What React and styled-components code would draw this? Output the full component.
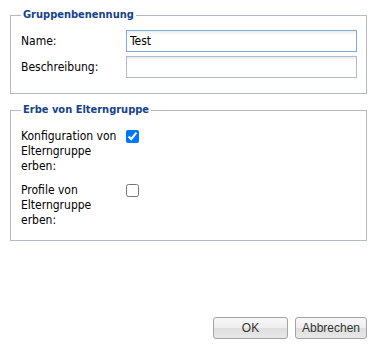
import React from 'react';
import styled, {createGlobalStyle} from "styled-components";

const Global = createGlobalStyle`
  html, body {
    margin: 0;
    padding: 0;
    background: #fff;
  }
  body {
    font-family: Tahoma, "DejaVu Sans Condensed", "Noto Sans", sans-serif;
  }
`

const Page = styled.div`
  width: 374px;
  height: 346px;
  display: flex;
  flex-direction: column;
  box-sizing: border-box;
  padding: 8px 7px 7px 10px;
`

const Group = styled.fieldset`
  margin: 0 0 ${props => props.$mb || 0}px 0;
  width: 357px;
  box-sizing: border-box;
  border: 1px solid #b5b8c8;
  padding: ${props => props.$pt}px 9px ${props => props.$pb}px 10px;
  min-width: 0;
`

const Legend = styled.legend`
  padding: 0 2px;
  font-size: 11px;
  line-height: 14px;
  font-weight: bold;
  color: #15428b;
`

const FormGrid = styled.div`
  display: grid;
  grid-template-columns: 105px 1fr;
  row-gap: ${props => props.$gap}px;
  align-items: start;
`

const Label = styled.label`
  font-size: 12px;
  line-height: 15px;
  color: #000;
  padding-top: ${props => props.$pt || 0}px;
  padding-right: 4px;
`

const TextField = styled.input`
  display: block;
  box-sizing: border-box;
  width: 231px;
  height: 22px;
  margin: 0;
  padding: 1px 3px;
  border: 1px solid ${props => props.$active ? '#7eadd9' : '#b5b8c8'};
  background: linear-gradient(#ececec 0, #fff 4px, #fff 100%);
  font-family: Tahoma, "DejaVu Sans Condensed", "Noto Sans", sans-serif;
  font-size: 12px;
  color: #000;
  outline: none;
  caret-color: #000;
`

const Check = styled.input`
  width: 13px;
  height: 13px;
  margin: 1px 0 0 0;
`

const Footer = styled.div`
  margin-top: auto;
  display: flex;
  justify-content: flex-end;
  gap: 7px;
`

const Button = styled.button`
  width: ${props => props.$w}px;
  height: 22px;
  box-sizing: border-box;
  border: 1px solid #a3a3a3;
  border-radius: 3px;
  background: linear-gradient(#f7f7f7 0, #eeeeee 50%, #dedede 51%, #e8e8e8 100%);
  font-family: "Liberation Sans", Arial, sans-serif;
  font-size: 12px;
  color: #333;
  padding: 0;
`

const App = () => {
  return (
      <>
        <Global/>
        <Page>
          <Group $pt={8} $pb={15} $mb={9}>
            <Legend>Gruppenbenennung</Legend>
            <FormGrid $gap={4}>
              <Label $pt={4}>Name:</Label>
              <TextField $active defaultValue="Test" autoFocus/>
              <Label $pt={4}>Beschreibung:</Label>
              <TextField/>
            </FormGrid>
          </Group>
          <Group $pt={12} $pb={12}>
            <Legend>Erbe von Elterngruppe</Legend>
            <FormGrid $gap={9}>
              <Label>Konfiguration von Elterngruppe erben:</Label>
              <Check type="checkbox" defaultChecked/>
              <Label>Profile von Elterngruppe erben:</Label>
              <Check type="checkbox"/>
            </FormGrid>
          </Group>
          <Footer>
            <Button $w={75}>OK</Button>
            <Button $w={72}>Abbrechen</Button>
          </Footer>
        </Page>
      </>
  );
};

export default App;
